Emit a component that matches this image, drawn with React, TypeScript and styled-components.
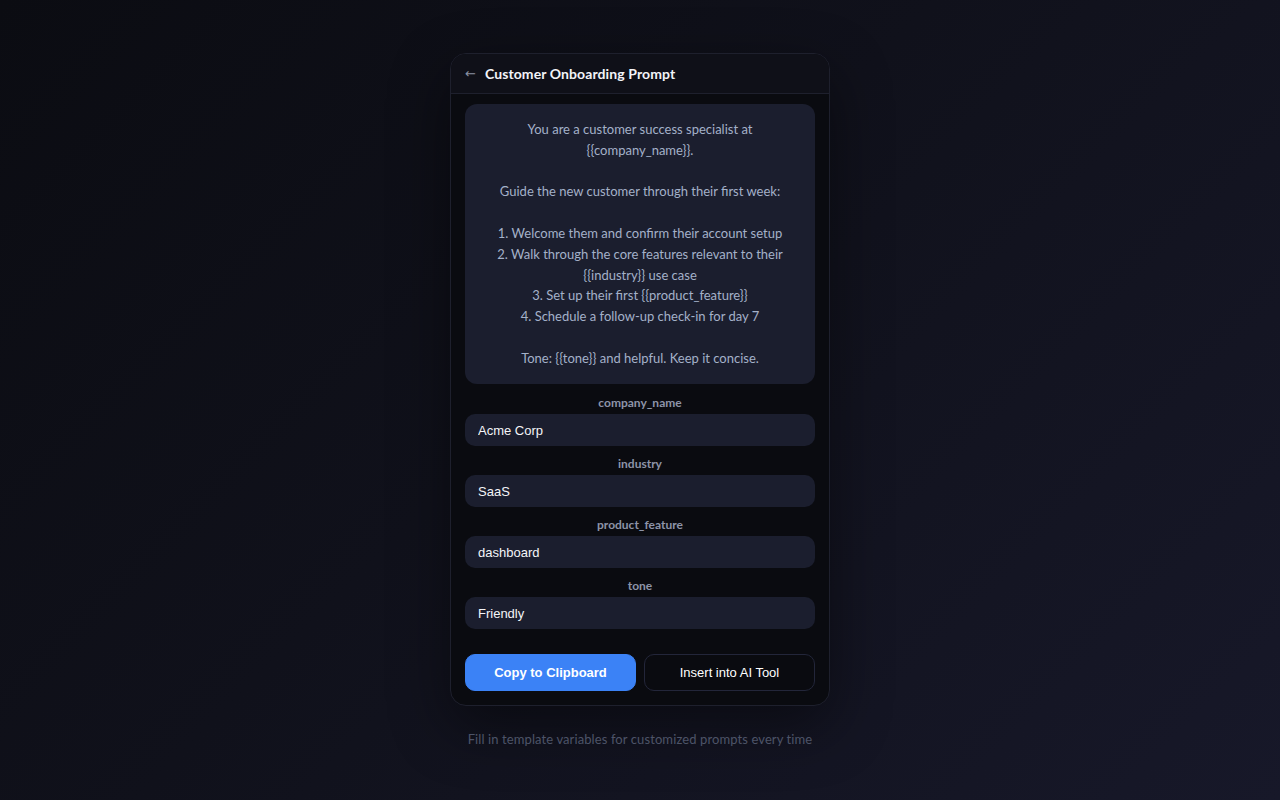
import React from "react";
import styled, { createGlobalStyle } from "styled-components";

const GlobalStyle = createGlobalStyle`
  html, body { margin: 0; padding: 0; }
  body {
    font-family: Lato, "Noto Sans", sans-serif;
    background: #0e0f17;
  }
  * { box-sizing: border-box; }
`;

const Page = styled.div`
  min-height: 800px;
  width: 100%;
  background: linear-gradient(135deg, #0b0c12 0%, #10111b 45%, #171829 100%);
  display: flex;
  flex-direction: column;
  align-items: center;
  padding-top: 53px;
`;

const Card = styled.div`
  width: 380px;
  background: #0a0b10;
  border: 1px solid #1e202d;
  border-radius: 16px;
  overflow: hidden;
  box-shadow: 0 20px 60px rgba(0, 0, 0, 0.45);
`;

const Header = styled.div`
  height: 40px;
  display: flex;
  align-items: center;
  gap: 9px;
  padding: 0 14px;
  background: #0f1018;
  border-bottom: 1px solid #1e202d;
`;

const Back = styled.span`
  color: #8a90a2;
  font-size: 13px;
  line-height: 1;
  font-family: "DejaVu Sans", sans-serif;
  margin-top: -1px;
`;

const Title = styled.h1`
  margin: 0;
  font-size: 14px;
  font-weight: 700;
  letter-spacing: 0.1px;
  color: #f3f4f8;
`;

const Body = styled.div`
  padding: 10px 14px 14px;
  display: flex;
  flex-direction: column;
`;

const PromptBox = styled.div`
  background: #1b1e2e;
  border-radius: 12px;
  padding: 15px 16px;
  color: #a4b1c9;
  font-size: 13px;
  line-height: 20.8px;
  text-align: center;
  white-space: pre-wrap;
  margin-bottom: 12px;
`;

const Field = styled.div`
  display: flex;
  flex-direction: column;
  gap: 5px;
  margin-bottom: 11px;
`;

const Label = styled.label`
  font-size: 12px;
  font-weight: 700;
  color: #8d94a8;
  text-align: center;
  line-height: 13px;
`;

const Input = styled.input`
  height: 32px;
  width: 100%;
  border: none;
  outline: none;
  border-radius: 10px;
  background: #1b1e2e;
  color: #f4f5f8;
  font-family: "Liberation Sans", Arial, sans-serif;
  font-size: 13px;
  padding: 1px 13px 0;
`;

const Actions = styled.div`
  display: flex;
  gap: 8px;
  margin-top: 14px;
`;

const Button = styled.button<{ $primary?: boolean }>`
  flex: 1;
  height: 37px;
  border-radius: 10px;
  font-family: "Liberation Sans", Arial, sans-serif;
  font-size: 13px;
  font-weight: ${(p) => (p.$primary ? 700 : 400)};
  color: #ffffff;
  cursor: pointer;
  background: ${(p) => (p.$primary ? "#3b82f6" : "transparent")};
  border: 1px solid ${(p) => (p.$primary ? "#3b82f6" : "#23263a")};
`;

const Footer = styled.p`
  margin: 25px 0 0;
  font-size: 13px;
  letter-spacing: 0.1px;
  color: #4d5468;
`;

const prompt = `You are a customer success specialist at
{{company_name}}.

Guide the new customer through their first week:

1. Welcome them and confirm their account setup
2. Walk through the core features relevant to their
{{industry}} use case
3. Set up their first {{product_feature}}
4. Schedule a follow-up check-in for day 7

Tone: {{tone}} and helpful. Keep it concise.`;

const fields = [
  { name: "company_name", value: "Acme Corp" },
  { name: "industry", value: "SaaS" },
  { name: "product_feature", value: "dashboard" },
  { name: "tone", value: "Friendly" },
];

export default function App() {
  return (
    <>
      <GlobalStyle />
      <Page>
        <Card>
          <Header>
            <Back>←</Back>
            <Title>Customer Onboarding Prompt</Title>
          </Header>
          <Body>
            <PromptBox>{prompt}</PromptBox>
            {fields.map((f) => (
              <Field key={f.name}>
                <Label>{f.name}</Label>
                <Input defaultValue={f.value} />
              </Field>
            ))}
            <Actions>
              <Button $primary>Copy to Clipboard</Button>
              <Button>Insert into AI Tool</Button>
            </Actions>
          </Body>
        </Card>
        <Footer>Fill in template variables for customized prompts every time</Footer>
      </Page>
    </>
  );
}
